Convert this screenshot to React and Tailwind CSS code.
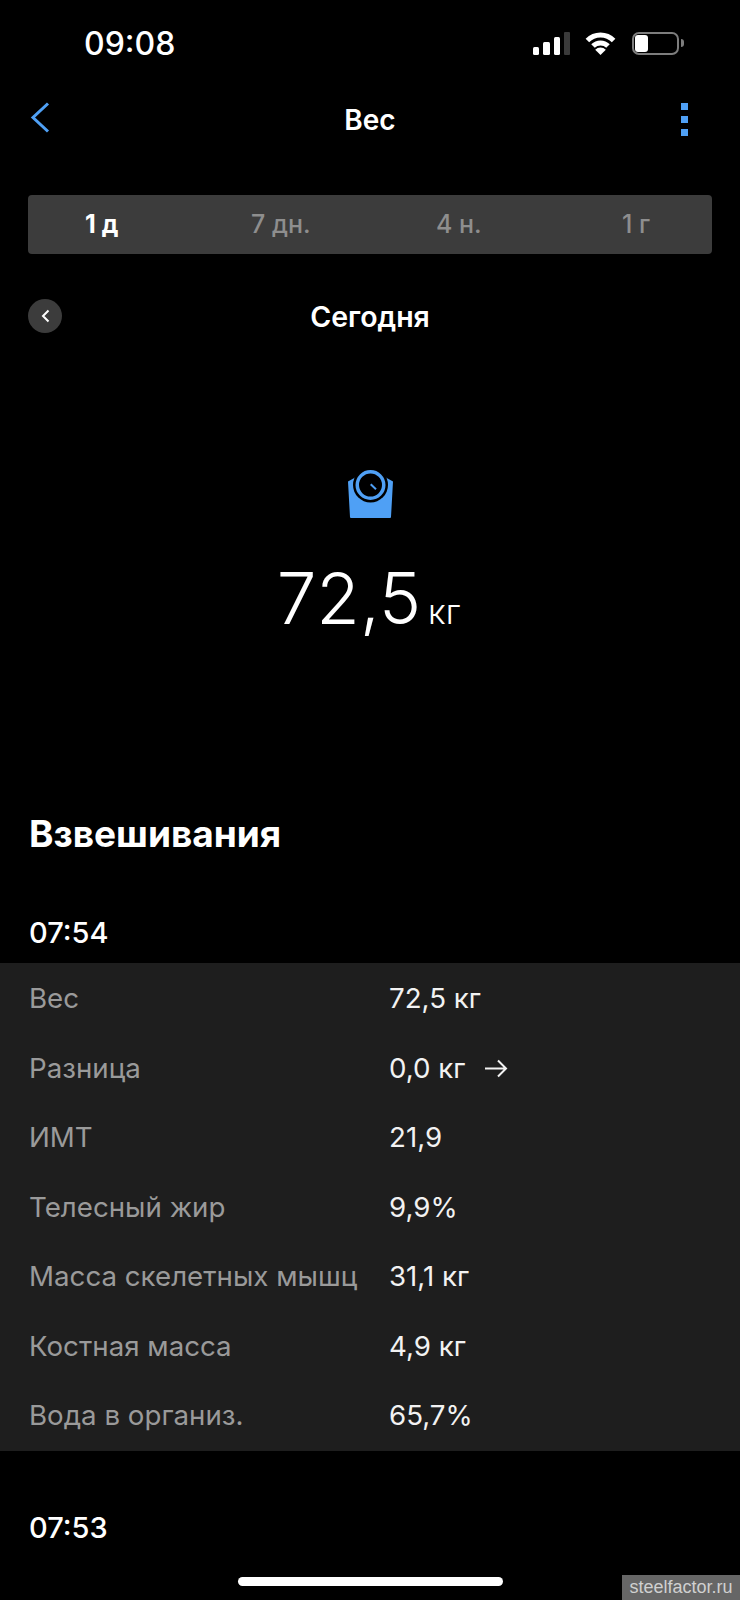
import React from 'react';

const rows = [
  ['Вес', '72,5 кг'],
  ['Разница', '0,0 кг'],
  ['ИМТ', '21,9'],
  ['Телесный жир', '9,9%'],
  ['Масса скелетных мышц', '31,1 кг'],
  ['Костная масса', '4,9 кг'],
  ['Вода в организ.', '65,7%'],
];

function StatusIcons() {
  return (
    <div className="flex items-center">
      <svg width="38" height="23" viewBox="0 0 38 23" fill="#fff">
        <rect x="0" y="15" width="6" height="8" rx="1.5" />
        <rect x="10" y="10" width="7" height="13" rx="1.5" />
        <rect x="21" y="5" width="6" height="18" rx="1.5" />
        <rect x="31" y="0" width="6" height="23" rx="1" fill="#3a3a3a" />
      </svg>
      <svg className="ml-[14px]" width="31" height="23" viewBox="0 0 31 23" fill="none" stroke="#fff">
        <path d="M2.4 8.4A18.5 18.5 0 0 1 28.6 8.4" strokeWidth="5" />
        <path d="M8 14A10.6 10.6 0 0 1 23 14" strokeWidth="5" />
        <path d="M15.5 23L10.2 17.7A7.5 7.5 0 0 1 20.8 17.7Z" fill="#fff" stroke="none" />
      </svg>
      <div className="ml-[16px] flex items-center">
        <div className="flex h-[23px] w-[47px] rounded-[7px] border-2 border-[#7d7d7d] p-[1px]">
          <div className="h-full w-[13px] rounded-[3px] bg-white" />
        </div>
        <div className="ml-[2px] h-[8px] w-[3px] rounded-r-full bg-[#7d7d7d]" />
      </div>
    </div>
  );
}

function ScaleIcon() {
  return (
    <svg width="45" height="48" viewBox="0 0 45 48">
      <path d="M0 11.500L8 7H37L45 11.500L43 47A1 1 0 0 1 42 48H3A1 1 0 0 1 2 47Z" fill="#4fa0f5" />
      <circle cx="22.500" cy="15" r="17.500" fill="#000" />
      <circle cx="22.500" cy="15" r="13.250" fill="none" stroke="#4fa0f5" strokeWidth="3.500" />
      <path d="M22.700 14.300L28 19.300" stroke="#4fa0f5" strokeWidth="2" />
    </svg>
  );
}

export default function App() {
  return (
    <div className="relative h-[1600px] w-[740px] overflow-hidden bg-black font-['Inter',sans-serif] text-white">
      <div className="mt-[28px] flex h-[30px] items-center justify-between pl-[84px] pr-[56px]">
        <span className="pt-[2px] text-[32px] font-medium leading-none">09:08</span>
        <StatusIcons />
      </div>

      <div className="relative mt-[35px] flex h-[50px] items-center justify-center">
        <svg className="absolute left-[30px] top-[9px]" width="20" height="31" viewBox="0 0 20 31" fill="none" stroke="#4fa0f5" strokeWidth="3">
          <path d="M18 1.500L3 15.500L18 29.500" />
        </svg>
        <span className="pt-[3px] text-[28px] font-semibold leading-none">Вес</span>
        <div className="absolute left-[681px] top-[10px] flex flex-col gap-[6px]">
          <div className="size-[7px] bg-[#4fa0f5]" />
          <div className="size-[7px] bg-[#4fa0f5]" />
          <div className="size-[7px] bg-[#4fa0f5]" />
        </div>
      </div>

      <div className="mx-[28px] mt-[52px] flex h-[59px] items-center rounded-[4px] bg-[#3c3c3c] pl-[57px] pt-[1px] text-[25px] font-medium text-[#8e8e8e]">
        <span className="w-[166px] font-bold text-white">1 д</span>
        <span className="w-[185px]">7 дн.</span>
        <span className="w-[186px]">4 н.</span>
        <span>1 г</span>
      </div>

      <div className="relative mx-[28px] mt-[45px] flex h-[34px] items-center justify-center">
        <div className="absolute left-0 top-0 flex size-[34px] items-center justify-center rounded-full bg-[#3c3c3c]">
          <svg width="9" height="14" viewBox="0 0 9 14" fill="none" stroke="#fff" strokeWidth="2">
            <path d="M7.500 1.500L2 7L7.500 12.500" />
          </svg>
        </div>
        <span className="pt-[2px] text-[28.500px] font-semibold leading-none">Сегодня</span>
      </div>

      <div className="mt-[137px] flex h-[48px] justify-center pl-[1px]">
        <ScaleIcon />
      </div>

      <div className="mt-[45px] flex h-[70px] items-baseline justify-center pr-[3px]">
        <span className="text-[71px] font-light leading-[70px]">72,5</span>
        <span className="ml-[7px] text-[34px] font-light leading-none">кг</span>
      </div>

      <h1 className="mt-[179px] h-[43px] pl-[29px] text-[37px] font-bold leading-[44px]">Взвешивания</h1>

      <div className="mt-[60px] h-[35px] pl-[29px] text-[29px] font-medium leading-[36px]">07:54</div>

      <div className="mt-[13px] grid h-[488px] grid-rows-7 bg-[#1e1e1e] pt-[1px] text-[27.700px]">
        {rows.map(([label, value]) => (
          <div key={label} className="flex items-center pl-[29px]">
            <span className="w-[360px] whitespace-nowrap text-[#9a9a9a]">{label}</span>
            <span className="flex items-center text-[#f2f2f2]">
              {value}
              {label === 'Разница' && (
                <svg className="ml-[20px]" width="23" height="19" viewBox="0 0 23 19" fill="none" stroke="#f2f2f2" strokeWidth="2">
                  <path d="M0 9.500H21M13 1.500L21 9.500L13 17.500" />
                </svg>
              )}
            </span>
          </div>
        ))}
      </div>

      <div className="mt-[59px] h-[35px] pl-[29px] text-[29px] font-medium leading-[36px]">07:53</div>

      <div className="absolute bottom-[14px] left-[238px] h-[9px] w-[265px] rounded-full bg-white" />
      <div className="absolute bottom-0 right-0 flex h-[25px] w-[118px] items-center justify-center bg-[#666666] font-['Liberation_Sans',sans-serif] text-[18px] text-[#d0d0d0]">
        steelfactor.ru
      </div>
    </div>
  );
}
